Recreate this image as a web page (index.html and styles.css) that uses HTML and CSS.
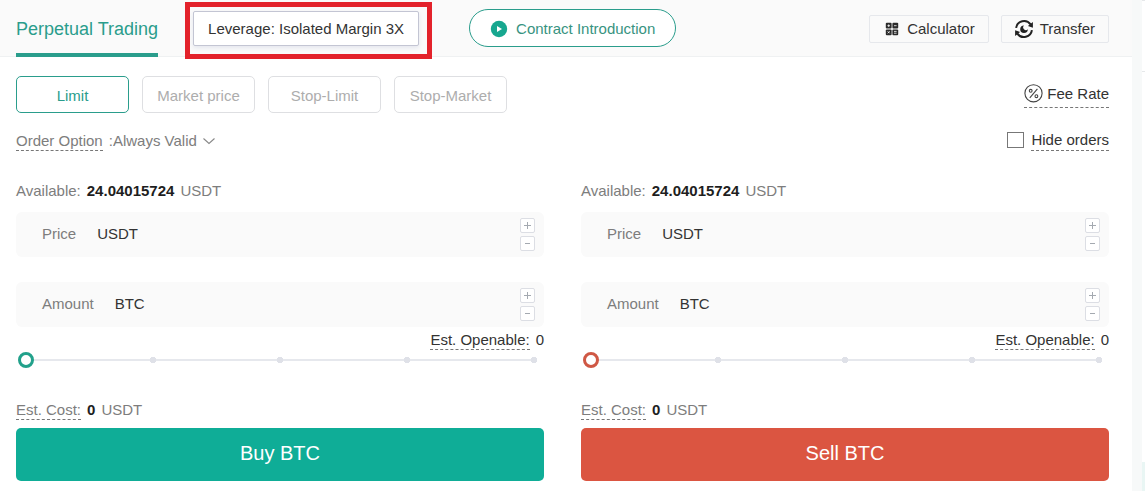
FILE: index.html
```html
<!DOCTYPE html>
<html lang="en">
<head>
    <meta charset="UTF-8">
    <meta name="viewport" content="width=device-width, initial-scale=1.0">
    <title>Perpetual Trading</title>
    <link rel="stylesheet" href="styles.css">
</head>
<body>
    <div class="page">
        <main class="panel">
            <header class="header">
                <a href="#" class="title">Perpetual Trading</a>
                <div class="highlight">
                    <button type="button" class="leverage">Leverage: Isolated Margin 3X</button>
                </div>
                <button type="button" class="intro">
                    <svg width="18" height="18" viewBox="0 0 18 18" aria-hidden="true">
                        <circle cx="9" cy="9" r="8.2" fill="#17a78f"/>
                        <path d="M7 6v6l5-3z" fill="#fff"/>
                    </svg>
                    Contract Introduction
                </button>
                <div class="tools">
                    <button type="button" class="tool calculator">
                        <svg width="14" height="14" viewBox="0 0 14 14" aria-hidden="true">
                            <g fill="#2b2b2b">
                                <rect x=".8" y=".8" width="5.8" height="5.8" rx="1"/>
                                <rect x="7.4" y=".8" width="5.8" height="5.8" rx="1"/>
                                <rect x=".8" y="7.4" width="5.8" height="5.8" rx="1"/>
                                <rect x="7.4" y="7.4" width="5.8" height="5.8" rx="1"/>
                            </g>
                            <path d="M2.4 3.7h2.6M3.7 2.4v2.6M9 3.7h2.6M2.7 9.3l2 2M4.7 9.3l-2 2M9 9.4h2.6M9 11.2h2.6" stroke="#fff" stroke-width=".8" fill="none"/>
                        </svg>
                        Calculator
                    </button>
                    <button type="button" class="tool transfer">
                        <svg width="20" height="20" viewBox="0 0 20 20" aria-hidden="true">
                            <path d="M2.1 8.9A8 8 0 0 1 16.6 5.4M17.9 11.1A8 8 0 0 1 3.4 14.6" stroke="#222" stroke-width="2" fill="none"/>
                            <path d="M18.9 3v5.8l-5-1.8zM1.1 17v-5.8l5 1.8z" fill="#222"/>
                            <path d="M10 6.4A3.8 3.8 0 1 0 13.8 10.2A2.6 2.6 0 0 1 10 6.4z" fill="#222"/>
                        </svg>
                        Transfer
                    </button>
                </div>
            </header>

            <div class="content">
                <div class="row">
                    <div class="types">
                        <button type="button" class="type active">Limit</button>
                        <button type="button" class="type">Market price</button>
                        <button type="button" class="type">Stop-Limit</button>
                        <button type="button" class="type">Stop-Market</button>
                    </div>
                    <a href="#" class="fee dashed">
                        <svg width="19" height="20" viewBox="0 0 19 20" aria-hidden="true">
                            <g fill="none" stroke="#444" stroke-width="1.1">
                                <circle cx="9.5" cy="9.3" r="8.6"/>
                                <circle cx="6.7" cy="6.8" r="1.4"/>
                                <circle cx="12.4" cy="12.2" r="1.4"/>
                                <path d="M13.4 4.8L5.8 13.8"/>
                            </g>
                        </svg>
                        Fee Rate
                    </a>
                </div>

                <div class="row options">
                    <div class="order-option">
                        <label for="validity" class="dashed">Order Option</label>
                        <span class="select">
                            :<select id="validity">
                                <option>Always Valid</option>
                            </select>
                            <svg width="12" height="8" viewBox="0 0 12 8" aria-hidden="true">
                                <path d="M.5 1.5L6 6.5l5.500-5" fill="none" stroke="#888" stroke-width="1.1"/>
                            </svg>
                        </span>
                    </div>
                    <div class="hide-orders">
                        <input type="checkbox" id="hide">
                        <label for="hide" class="dashed">Hide orders</label>
                    </div>
                </div>

                <div class="forms">
                    <form class="order buy">
                        <p class="available">Available: <b>24.04015724</b> USDT</p>
                        <div class="field">
                            <label for="buy-price">Price</label>
                            <input type="text" id="buy-price" placeholder="USDT">
                            <div class="stepper">
                                <button type="button" aria-label="Increase price"><svg width="9" height="9" viewBox="0 0 9 9"><path d="M1 4.5h7M4.5 1v7"/></svg></button>
                                <button type="button" aria-label="Decrease price"><svg width="9" height="9" viewBox="0 0 9 9"><path d="M2 4.5h5"/></svg></button>
                            </div>
                        </div>
                        <div class="field">
                            <label for="buy-amount">Amount</label>
                            <input type="text" id="buy-amount" placeholder="BTC">
                            <div class="stepper">
                                <button type="button" aria-label="Increase amount"><svg width="9" height="9" viewBox="0 0 9 9"><path d="M1 4.5h7M4.5 1v7"/></svg></button>
                                <button type="button" aria-label="Decrease amount"><svg width="9" height="9" viewBox="0 0 9 9"><path d="M2 4.5h5"/></svg></button>
                            </div>
                        </div>
                        <p class="openable"><label for="buy-range" class="dashed">Est. Openable:</label> 0</p>
                        <input type="range" id="buy-range" class="slider" min="0" max="100" step="25" value="0">
                        <p class="cost"><span class="dashed">Est. Cost:</span> <b>0</b> USDT</p>
                        <button type="button" class="submit">Buy BTC</button>
                    </form>

                    <form class="order sell">
                        <p class="available">Available: <b>24.04015724</b> USDT</p>
                        <div class="field">
                            <label for="sell-price">Price</label>
                            <input type="text" id="sell-price" placeholder="USDT">
                            <div class="stepper">
                                <button type="button" aria-label="Increase price"><svg width="9" height="9" viewBox="0 0 9 9"><path d="M1 4.5h7M4.5 1v7"/></svg></button>
                                <button type="button" aria-label="Decrease price"><svg width="9" height="9" viewBox="0 0 9 9"><path d="M2 4.5h5"/></svg></button>
                            </div>
                        </div>
                        <div class="field">
                            <label for="sell-amount">Amount</label>
                            <input type="text" id="sell-amount" placeholder="BTC">
                            <div class="stepper">
                                <button type="button" aria-label="Increase amount"><svg width="9" height="9" viewBox="0 0 9 9"><path d="M1 4.5h7M4.5 1v7"/></svg></button>
                                <button type="button" aria-label="Decrease amount"><svg width="9" height="9" viewBox="0 0 9 9"><path d="M2 4.5h5"/></svg></button>
                            </div>
                        </div>
                        <p class="openable"><label for="sell-range" class="dashed">Est. Openable:</label> 0</p>
                        <input type="range" id="sell-range" class="slider" min="0" max="100" step="25" value="0">
                        <p class="cost"><span class="dashed">Est. Cost:</span> <b>0</b> USDT</p>
                        <button type="button" class="submit">Sell BTC</button>
                    </form>
                </div>
            </div>
        </main>
        <aside class="side">
            <div class="side-top"></div>
            <div class="side-middle"></div>
            <div class="side-bottom"></div>
        </aside>
    </div>
</body>
</html>
```

FILE: styles.css
```css
* {
    box-sizing: border-box;
}
body {
    margin: 0;
    font-family: "Liberation Sans", Arial, sans-serif;
    font-size: 15px;
    line-height: 18px;
    color: #333;
    background-color: #f7f9f9;
}
button, input, select {
    font: inherit;
    color: inherit;
    margin: 0;
    padding: 0;
}
button {
    cursor: pointer;
}
a {
    color: inherit;
    text-decoration: none;
}
p {
    margin: 0;
}
.page {
    display: flex;
    gap: 10px;
    min-height: 100vh;
}
.panel {
    flex: 1;
    background-color: #fff;
}
.dashed {
    border-bottom: 1px dashed #777;
}

/* Header */
.header {
    display: flex;
    align-items: center;
    height: 57px;
    padding: 0 23px 0 16px;
    background-color: #fafafa;
    border-bottom: 1px solid #eff1f2;
}
.title {
    height: 57px;
    margin-bottom: -1px;
    padding-top: 4px;
    border-bottom: 4px solid #2a9d8c;
    font-size: 18px;
    line-height: 50px;
    color: #2a9d8c;
}
.highlight {
    position: relative;
    margin-left: 35px;
}
.highlight::after {
    content: "";
    position: absolute;
    inset: -9px -13px -13px -8px;
    border: 5px solid #e3222b;
    pointer-events: none;
}
.leverage {
    display: block;
    height: 35px;
    padding: 2px 14px 0;
    background-color: #fff;
    border: 1px solid #c3c5d3;
    border-radius: 2px;
    box-shadow: 0 2px 4px #e4e6ee;
}
.intro {
    display: flex;
    align-items: center;
    gap: 8px;
    height: 38px;
    margin-left: 50px;
    padding: 1px 20px 0;
    background-color: #fff;
    border: 1px solid #2a9d8c;
    border-radius: 19px;
    color: #38937f;
}
.tools {
    display: flex;
    gap: 12px;
    margin-left: auto;
}
.tool {
    display: flex;
    align-items: center;
    height: 28px;
    margin-top: 2px;
    padding: 0 13px;
    background-color: #fafafa;
    border: 1px solid #e6e8ec;
    border-radius: 2px;
}
.calculator {
    gap: 8px;
    padding-left: 15px;
}
.transfer {
    gap: 6px;
    padding-left: 12px;
}

/* Order type and options */
.content {
    padding: 19px 23px 10px 16px;
}
.row {
    display: flex;
    justify-content: space-between;
    align-items: center;
}
.types {
    display: flex;
    gap: 13px;
}
.type {
    width: 113px;
    height: 37px;
    padding-top: 2px;
    background-color: #fff;
    border: 1px solid #dedfe2;
    border-radius: 5px;
    color: #adadad;
}
.type.active {
    border-color: #2a9d8c;
    color: #2a9d8c;
}
.fee {
    display: flex;
    align-items: center;
    gap: 4px;
    height: 27px;
}
.options {
    height: 20px;
    margin-top: 18px;
}
.order-option {
    display: flex;
    gap: 6px;
    color: #7d7d7d;
}
.select {
    display: flex;
    align-items: center;
}
.select select {
    appearance: none;
    border: 0;
    background: none;
}
.select svg {
    margin-left: 6px;
}
.hide-orders {
    display: flex;
    align-items: center;
    gap: 7px;
    margin-bottom: 3px;
}
.hide-orders input {
    appearance: none;
    width: 17px;
    height: 16px;
    border: 1px solid #777;
    background-color: #fff;
}
.hide-orders label {
    padding: 2px 0 1px;
}

/* Buy and sell forms */
.forms {
    display: grid;
    grid-template-columns: 1fr 1fr;
    gap: 37px;
    margin-top: 31px;
}
.order {
    display: flex;
    flex-direction: column;
}
.available, .cost {
    display: flex;
    gap: 6px;
    color: #7d7d7d;
}
.order b {
    color: #1e1e1e;
}
.field {
    display: flex;
    align-items: center;
    gap: 21px;
    height: 45px;
    padding: 0 9px 0 26px;
    background-color: #fafafa;
    border-radius: 6px;
}
.available + .field {
    margin-top: 12px;
    margin-bottom: 25px;
}
.field label {
    padding-bottom: 2px;
    color: #7d7d7d;
}
.field input {
    flex: 1;
    min-width: 0;
    padding-bottom: 2px;
    border: 0;
    background: none;
}
.field input::placeholder {
    color: #333;
}
.stepper {
    display: flex;
    flex-direction: column;
    gap: 3px;
}
.stepper button {
    display: flex;
    align-items: center;
    justify-content: center;
    width: 15px;
    height: 15px;
    background-color: #fff;
    border: 1px solid #dcdee4;
    border-radius: 2px;
}
.stepper path {
    fill: none;
    stroke: #a4a9b0;
}
.openable {
    display: flex;
    justify-content: flex-end;
    gap: 6px;
    margin-top: 4px;
}
.slider {
    --dot: radial-gradient(circle, #dfe1e8 3px, transparent 3px);
    appearance: none;
    height: 16px;
    margin: 2px 2px 0;
    background:
        var(--dot) 25% 50% / 16px 16px no-repeat,
        var(--dot) 50% 50% / 16px 16px no-repeat,
        var(--dot) 75% 50% / 16px 16px no-repeat,
        var(--dot) 100% 50% / 16px 16px no-repeat,
        linear-gradient(#e6e8ed, #e6e8ed) 50% 50% / calc(100% - 16px) 2px no-repeat;
}
.slider::-webkit-slider-thumb {
    appearance: none;
    width: 16px;
    height: 16px;
    border: 3px solid #22a18b;
    border-radius: 50%;
    background-color: #fff;
}
.sell .slider::-webkit-slider-thumb {
    border-color: #cf5845;
}
.cost {
    margin-top: 33px;
}
.submit {
    height: 53px;
    margin-top: 8px;
    padding-bottom: 4px;
    border: 0;
    border-radius: 5px;
    background-color: #0fad97;
    color: #fff;
    font-size: 20px;
}
.sell .submit {
    background-color: #db5541;
}

/* Edge of the neighbouring panel */
.side {
    display: flex;
    flex-direction: column;
    width: 3px;
    background-color: #fff;
}
.side-top {
    height: 72px;
    border-top: 1px solid #e6e8ea;
    border-bottom: 1px solid #e6e8ea;
}
.side-middle {
    flex: 1;
}
.side-bottom {
    height: 29px;
    background-color: #e9f6f4;
}
```
